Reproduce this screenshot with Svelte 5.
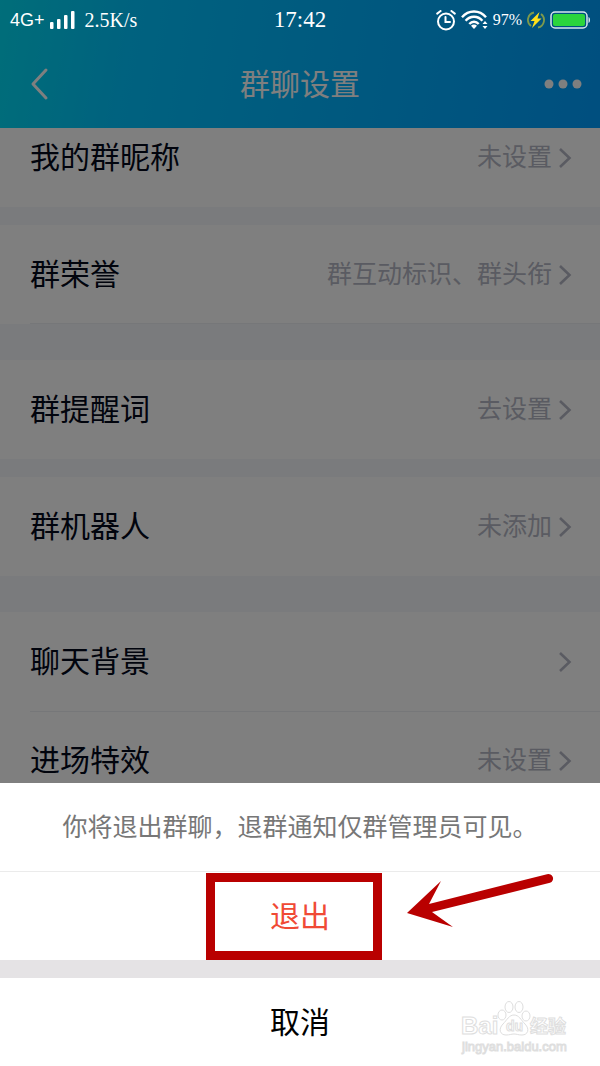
<script lang="ts">
    type Row = { label: string; value: string };

    // each group is one white block, `gap` is the grey band under it
    const groups: { rows: Row[]; gap: 'small' | 'large'; lined?: boolean }[] = [
        { rows: [{ label: '我的群昵称', value: '未设置' }], gap: 'small' },
        { rows: [{ label: '群荣誉', value: '群互动标识、群头衔' }], gap: 'large', lined: true },
        { rows: [{ label: '群提醒词', value: '去设置' }], gap: 'small' },
        { rows: [{ label: '群机器人', value: '未添加' }], gap: 'large' },
        {
            rows: [
                { label: '聊天背景', value: '' },
                { label: '进场特效', value: '未设置' }
            ],
            gap: 'small'
        }
    ];
</script>

<div class="page">
    <div class="status">
        <div class="side">
            <span class="network">4G+</span>
            <svg width="26" height="18" viewBox="0 0 26 18" fill="#fff" aria-hidden="true">
                <rect x="0" y="11" width="3.500" height="7" rx="1" />
                <rect x="7" y="8" width="3.500" height="10" rx="1" />
                <rect x="14" y="4" width="3.500" height="14" rx="1" />
                <rect x="21" y="0" width="3.500" height="18" rx="1" />
            </svg>
            <span class="speed">2.5K/s</span>
        </div>
        <span class="time">17:42</span>
        <div class="side right">
            <svg width="20" height="21" viewBox="0 0 20 21" fill="none" stroke="#fff" stroke-width="2" stroke-linecap="round" aria-hidden="true">
                <circle cx="10" cy="11.5" r="8" />
                <path d="M9.5 7v5h4.500M1.200 3.600 4.600 1M18.800 3.600 15.400 1" />
            </svg>
            <svg width="27" height="20" viewBox="0 0 27 20" fill="none" stroke="#fff" stroke-width="2.400" aria-hidden="true">
                <path d="M1 7.200c6.500-7.600 17.500-7.600 24 0M4.600 10.700c4.600-5.300 12.200-5.300 16.800 0M8.300 14c2.700-3 6.700-3 9.400 0" />
                <path d="M10 15.800c1.800-1.600 4.200-1.600 6 0L13 19z" fill="#fff" stroke="none" />
                <path d="M21.500 14 24 11l2.500 3zM21.500 16 24 19l2.500-3z" fill="#fff" stroke="none" />
            </svg>
            <span class="percent">97%</span>
            <svg width="18" height="18" viewBox="0 0 18 18" fill="none" aria-hidden="true">
                <path d="M7 1.500A7.600 7.600 0 0 0 4 15M11 16.500A7.600 7.600 0 0 0 14 3" stroke="#7d9a4c" stroke-width="1.800" />
                <path d="M12.500 1 3.500 10h4L5 17l9.500-9.500h-4z" fill="#ffe11a" />
            </svg>
            <svg width="40" height="18" viewBox="0 0 40 18" fill="none" aria-hidden="true">
                <rect x="1" y="1" width="36" height="16" rx="4" stroke="#d7e6ee" stroke-width="1.500" />
                <rect x="3" y="3" width="32" height="12" rx="2" fill="#2bd53c" />
                <path d="M38.500 6c2 .5 2 5.500 0 6z" fill="#d7e6ee" />
            </svg>
        </div>
    </div>

    <header>
        <button class="icon" aria-label="返回">
            <svg width="20" height="34" viewBox="0 0 20 34" fill="none" stroke="#fff" stroke-width="3" stroke-linecap="round" stroke-linejoin="round">
                <path d="M16 3 3 17l13 14" />
            </svg>
        </button>
        <h1>群聊设置</h1>
        <button class="icon end" aria-label="更多">
            <svg width="38" height="10" viewBox="0 0 38 10" fill="#fff">
                <circle cx="5" cy="5" r="4.500" />
                <circle cx="19" cy="5" r="4.500" />
                <circle cx="33" cy="5" r="4.500" />
            </svg>
        </button>
    </header>

    <main>
        <div class="list">
            {#each groups as group}
                <section class={group.gap} class:lined={group.lined}>
                    {#each group.rows as row}
                        <button class="row">
                            <span class="label">{row.label}</span>
                            <span class="value">{row.value}</span>
                            <svg width="14" height="22" viewBox="0 0 14 22" fill="none" stroke="#b5b7c4" stroke-width="2.600">
                                <path d="m2 2 9.500 9L2 20" />
                            </svg>
                        </button>
                    {/each}
                </section>
            {/each}
        </div>
    </main>

    <div class="scrim"></div>

    <div class="sheet" role="dialog" aria-label="退出群聊">
        <p>你将退出群聊，退群通知仅群管理员可见。</p>
        <div class="choice">
            <button class="action quit">退出</button>
            <div class="frame"></div>
            <svg class="arrow" width="150" height="58" viewBox="0 0 150 58" aria-hidden="true">
                <path d="M3 41 37 9 25 32 143 2.200a4.500 4.500 0 0 1 3 8.600L28 40 49 55z" fill="#b90000" />
            </svg>
        </div>
        <div class="choice last">
            <button class="action">取消</button>
            <svg class="watermark" width="112" height="56" viewBox="0 0 112 56" fill="#fff" stroke="#dedede" aria-hidden="true">
                <text x="3" y="34" class="brand">Bai</text>
                <ellipse cx="44" cy="15" rx="4" ry="5" />
                <ellipse cx="51" cy="7" rx="4" ry="5.500" />
                <ellipse cx="61" cy="7" rx="4" ry="5.500" />
                <ellipse cx="68" cy="16" rx="4" ry="5" />
                <path d="M56 15c5 0 7 5 11 9 5 5 3 11-3 11-4 0-5-1-8-1s-4 1-8 1c-6 0-8-6-3-11 4-4 6-9 11-9z" />
                <text x="48" y="31" class="du">du</text>
                <text x="72" y="33" class="exp">经验</text>
                <text x="4" y="51" class="site">jingyan.baidu.com</text>
            </svg>
        </div>
    </div>
</div>

<style>
    :global(body) {
        margin: 0;
    }
    .page {
        position: relative;
        display: flex;
        flex-direction: column;
        height: 100vh;
        overflow: hidden;
        background: #f4f7fb;
        font-family: 'Liberation Sans', 'Noto Sans CJK SC', sans-serif;
    }
    button {
        margin: 0;
        padding: 0;
        border: none;
        background: none;
        font: inherit;
        color: inherit;
        cursor: pointer;
    }
    svg {
        display: block;
        flex: none;
    }

    .status {
        position: absolute;
        z-index: 2;
        top: 0;
        left: 0;
        right: 0;
        box-sizing: border-box;
        display: flex;
        align-items: center;
        height: 40px;
        padding: 0 10px;
        color: #fff;
        font-family: 'Liberation Serif', serif;
    }
    .side {
        flex: 1;
        display: flex;
        align-items: center;
        gap: 5px;
    }
    .right {
        justify-content: flex-end;
    }
    .network {
        font-family: 'Liberation Sans', sans-serif;
        font-size: 18px;
    }
    .speed {
        margin-left: 4px;
        font-size: 20px;
    }
    .time {
        font-size: 23px;
    }
    .percent {
        font-size: 16px;
    }

    header {
        flex: none;
        box-sizing: border-box;
        display: flex;
        align-items: center;
        height: 128px;
        padding: 40px 18px 0 30px;
        background: linear-gradient(100deg, #00dcf4 0%, #00c4fe 22%, #00b6ff 50%, #009eff 100%);
        color: #fff;
    }
    h1 {
        margin: 0;
        padding: 0 12px 4px 0;
        font-size: 30px;
        font-weight: 400;
    }
    .icon {
        flex: 1;
        display: flex;
    }
    .end {
        justify-content: flex-end;
    }

    main {
        flex: 1;
        overflow: hidden;
    }
    /* list is scrolled a little way under the header */
    .list {
        margin-top: -20px;
    }
    section {
        background: #fff;
    }
    .small {
        margin-bottom: 18px;
    }
    .large {
        margin-bottom: 36px;
    }
    .row {
        position: relative;
        box-sizing: border-box;
        display: flex;
        align-items: center;
        gap: 6px;
        width: 100%;
        height: 99px;
        padding: 0 28px 0 30px;
        text-align: left;
    }
    .row + .row::before,
    .lined .row::after {
        content: '';
        position: absolute;
        left: 30px;
        right: 0;
        height: 1px;
        background: #eceef3;
    }
    .row + .row::before {
        top: 0;
    }
    .lined .row::after {
        bottom: 0;
    }
    .label,
    .value {
        padding-bottom: 5px;
    }
    .label {
        flex: 1;
        font-size: 30px;
        color: #03081a;
    }
    .value {
        font-size: 25px;
        color: #b5b7c4;
    }

    .scrim {
        position: absolute;
        inset: 0;
        background: rgba(0, 0, 0, 0.5);
    }
    .sheet {
        position: absolute;
        left: 0;
        right: 0;
        bottom: 0;
        background: #fff;
    }
    p {
        margin: 0;
        border-bottom: 1px solid #ebebeb;
        font-size: 25px;
        line-height: 88px;
        text-align: center;
        color: #777;
    }
    .choice {
        position: relative;
        height: 88px;
    }
    .last {
        border-top: 18px solid #e5e3e5;
    }
    .action {
        width: 100%;
        height: 100%;
        padding-bottom: 5px;
        font-size: 30px;
        color: #000;
    }
    .quit {
        color: #f04a35;
    }
    .frame {
        position: absolute;
        top: 1px;
        bottom: 0;
        left: calc(50% - 94px);
        box-sizing: border-box;
        width: 176px;
        border: 9px solid #b90000;
        pointer-events: none;
    }
    .arrow {
        position: absolute;
        top: 0;
        left: calc(50% + 104px);
    }
    .watermark {
        position: absolute;
        right: 30px;
        bottom: 10px;
    }
    .brand {
        font-size: 24px;
        font-weight: 700;
    }
    .du {
        font-size: 14px;
        font-weight: 700;
    }
    .exp {
        font-size: 18px;
        font-weight: 700;
    }
    .site {
        font-size: 13px;
    }
</style>
